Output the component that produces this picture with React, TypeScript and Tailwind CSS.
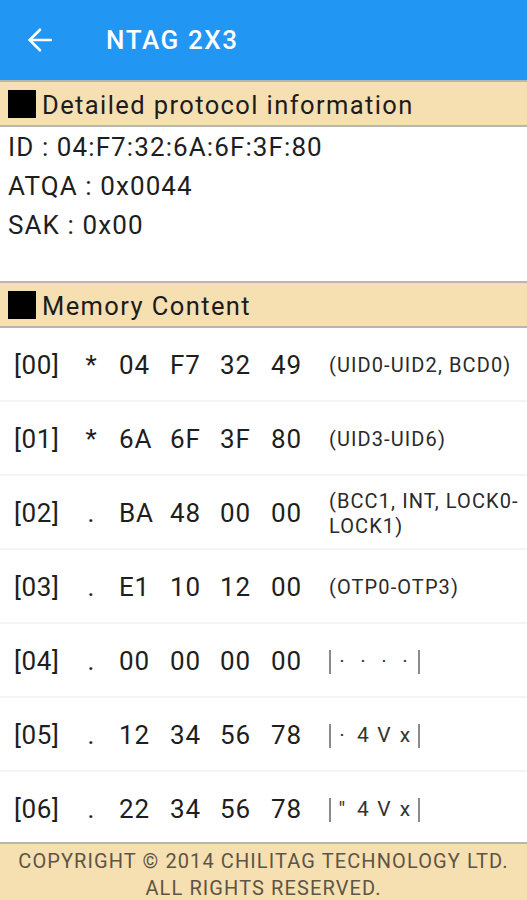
type Row = {
    idx: string;
    flag: string;
    bytes: string[];
    note?: string;
    ascii?: string[];
};

const rows: Row[] = [
    { idx: '[00]', flag: '*', bytes: ['04', 'F7', '32', '49'], note: '(UID0-UID2, BCD0)' },
    { idx: '[01]', flag: '*', bytes: ['6A', '6F', '3F', '80'], note: '(UID3-UID6)' },
    { idx: '[02]', flag: '.', bytes: ['BA', '48', '00', '00'], note: '(BCC1, INT, LOCK0-LOCK1)' },
    { idx: '[03]', flag: '.', bytes: ['E1', '10', '12', '00'], note: '(OTP0-OTP3)' },
    { idx: '[04]', flag: '.', bytes: ['00', '00', '00', '00'], ascii: ['·', '·', '·', '·'] },
    { idx: '[05]', flag: '.', bytes: ['12', '34', '56', '78'], ascii: ['·', '4', 'V', 'x'] },
    { idx: '[06]', flag: '.', bytes: ['22', '34', '56', '78'], ascii: ['"', '4', 'V', 'x'] },
];

const byteWidths = ['w-[51px]', 'w-[50px]', 'w-[51px]', 'w-[58px]'];

function SectionHeader({ title }: { title: string }) {
    return (
        <div className="h-[47px] shrink-0 bg-[#f6dfb1] border-t-2 border-b-2 border-[#b9b6ae] flex items-center pl-[8px]">
            <div className="w-[28px] h-[28px] bg-black" />
            <div className="ml-[6px] pt-[3px] text-[25.5px] text-[#1c1c1c] tracking-[1.4px]">{title}</div>
        </div>
    );
}

function Ascii({ chars }: { chars: string[] }) {
    return (
        <div className="flex items-center h-[26px] text-[21px] text-[#333]">
            <div className="w-[2px] h-[24px] bg-[#8a8a8a]" />
            {chars.map((c, i) => (
                <div key={i} className={`w-[21px] text-center ${i === 0 ? 'ml-[1px]' : ''}`}>{c}</div>
            ))}
            <div className="w-[2px] h-[24px] bg-[#8a8a8a] ml-[2px]" />
        </div>
    );
}

export default function App() {
    return (
        <div className="w-[527px] h-[900px] flex flex-col bg-white overflow-hidden font-['Roboto',sans-serif]">
            <header className="h-[80px] shrink-0 bg-[#2196f3] flex items-center text-white">
                <svg className="ml-[27px] w-[26px] h-[26px]" viewBox="0 0 24 24" fill="none" stroke="currentColor"
                    strokeWidth={2.4} strokeLinecap="round" strokeLinejoin="round">
                    <path d="M22 12H2.5" />
                    <path d="M12 2.5L2.5 12L12 21.5" />
                </svg>
                <h1 className="ml-[53px] text-[26px] font-medium tracking-[1.6px]">NTAG 2X3</h1>
            </header>

            <SectionHeader title="Detailed protocol information" />

            <div className="pl-[8px] pt-[1px] pb-[36px] text-[26px] leading-[39px] text-[#1e1e1e] tracking-[1.1px]">
                <div>ID : 04:F7:32:6A:6F:3F:80</div>
                <div>ATQA : 0x0044</div>
                <div>SAK : 0x00</div>
            </div>

            <SectionHeader title="Memory Content" />

            <div className="flex-1 overflow-hidden">
                {rows.map((r) => (
                    <div key={r.idx} className="h-[74px] pt-[3px] border-b-2 border-[#f4f4f4] flex items-center text-[#1e1e1e]">
                        <div className="w-[84px] shrink-0 pl-[14px] text-[26px] tracking-[0.6px]">{r.idx}</div>
                        <div className="w-[35px] shrink-0 text-[26px]">
                            <div className="w-[14px] text-center">{r.flag}</div>
                        </div>
                        {r.bytes.map((b, i) => (
                            <div key={i} className={`${byteWidths[i]} shrink-0 text-[26px] tracking-[0.8px]`}>{b}</div>
                        ))}
                        <div className="flex-1 pr-[6px] text-[20px] leading-[25px] tracking-[1.1px] text-[#2a2a2a]">
                            {r.ascii ? <Ascii chars={r.ascii} /> : r.note}
                        </div>
                    </div>
                ))}
            </div>

            <footer className="h-[58px] shrink-0 bg-[#f6dfb1] border-t-2 border-[#b9b6ae] flex flex-col items-center justify-center pt-[6px] text-[20px] leading-[27px] tracking-[1.1px] text-[#5d5545]">
                <div>COPYRIGHT © 2014 CHILITAG TECHNOLOGY LTD.</div>
                <div>ALL RIGHTS RESERVED.</div>
            </footer>
        </div>
    );
}
